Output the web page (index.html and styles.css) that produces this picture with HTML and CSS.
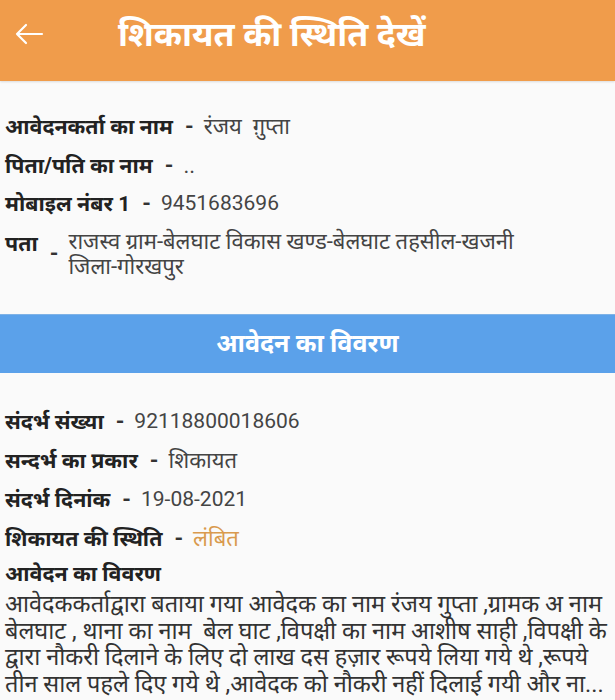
FILE: index.html
```html
<!DOCTYPE html>
<html lang="hi">
<head>
<meta charset="utf-8">
<link rel="stylesheet" href="styles.css">
</head>
<body>
<header class="appbar">
  <svg class="back" width="30" height="22" viewBox="0 0 30 22"><path d="M28 11H3M12 2L3 11l9 9" fill="none" stroke="#fff" stroke-width="2.2" stroke-linecap="round" stroke-linejoin="round"/></svg>
  <h1 class="title">शिकायत की स्थिति देखें</h1>
</header>
<section class="info">
  <div class="row"><span class="label">आवेदनकर्ता का नाम</span><span class="dash">-</span><span class="value">रंजय &nbsp;ग़ुप्ता</span></div>
  <div class="row"><span class="label">पिता/पति का नाम</span><span class="dash">-</span><span class="value">..</span></div>
  <div class="row"><span class="label">मोबाइल नंबर <span class="num">1</span></span><span class="dash">-</span><span class="value num">9451683696</span></div>
  <div class="row addr"><span class="label">पता</span><span class="dash">-</span><span class="value">राजस्व ग्राम-बेलघाट विकास खण्ड-बेलघाट तहसील-खजनी <span class="nowrap">जिला-गोरखपुर</span></span></div>
</section>
<div class="band">आवेदन का विवरण</div>
<section class="info second">
  <div class="row"><span class="label">संदर्भ संख्या</span><span class="dash">-</span><span class="value num">92118800018606</span></div>
  <div class="row"><span class="label">सन्दर्भ का प्रकार</span><span class="dash">-</span><span class="value">शिकायत</span></div>
  <div class="row"><span class="label">संदर्भ दिनांक</span><span class="dash">-</span><span class="value num">19-08-2021</span></div>
  <div class="row"><span class="label">शिकायत की स्थिति</span><span class="dash">-</span><span class="value pending">लंबित</span></div>
  <div class="heading">आवेदन का विवरण</div>
  <p class="desc">आवेदककर्ताद्वारा बताया गया आवेदक का नाम रंजय गुप्ता ,ग्रामक अ नाम बेलघाट , थाना का नाम &nbsp;बेल घाट ,विपक्षी का नाम आशीष साही ,विपक्षी के द्वारा नौकरी दिलाने के लिए दो लाख दस हज़ार रूपये लिया गये थे ,रूपये तीन साल पहले दिए गये थे ,आवेदक को नौकरी नहीं दिलाई गयी और ना...</p>
</section>
</body>
</html>
```
FILE: styles.css
```css
html, body {
  margin: 0;
  padding: 0;
  background: #fafafa;
  font-family: Roboto, "Noto Sans", "Noto Sans Devanagari", sans-serif;
  width: 615px;
  overflow: hidden;
}
.appbar {
  height: 81px;
  background: #f09c4b;
  display: flex;
  align-items: center;
  padding-bottom: 14px;
  box-sizing: border-box;
  box-shadow: 0 1px 2px rgba(0, 0, 0, 0.12);
}
.back {
  margin-left: 14px;
  flex: none;
}
.title {
  margin: 0 0 0 74px;
  color: #fff;
  font-size: 34px;
  font-weight: 700;
  line-height: 40px;
}
.info {
  padding: 31px 5px 0;
  display: flex;
  flex-direction: column;
}
.row {
  display: flex;
  align-items: flex-start;
  font-size: 22px;
  line-height: 29px;
  margin-bottom: 9.5px;
}
.num {
  font-size: 21px;
}
.nowrap {
  white-space: nowrap;
}
.label {
  font-weight: 700;
  font-size: 21.4px;
  color: #222;
}
.dash {
  color: #333;
  font-weight: 700;
  margin: 0 10px 0 12px;
}
.value {
  color: #444;
}
.addr .dash {
  align-self: center;
}
.addr .value {
  line-height: 25px;
}
.band {
  margin-top: 26px;
  background: #5ba1ea;
  color: #fff;
  font-size: 25px;
  font-weight: 700;
  text-align: center;
  height: 59px;
  line-height: 58px;
  border-top: 1px solid #7fb2e6;
  box-sizing: border-box;
}
.second {
  padding-top: 34px;
}
.second .row {
  margin-bottom: 10px;
}
.pending {
  color: #d99a4e;
}
.heading {
  font-size: 21.4px;
  font-weight: 700;
  color: #222;
  line-height: 24px;
  margin-top: -1px;
}
.desc {
  margin: 5px 0 0;
  font-size: 23.5px;
  line-height: 26.5px;
  color: #333;
}
```
